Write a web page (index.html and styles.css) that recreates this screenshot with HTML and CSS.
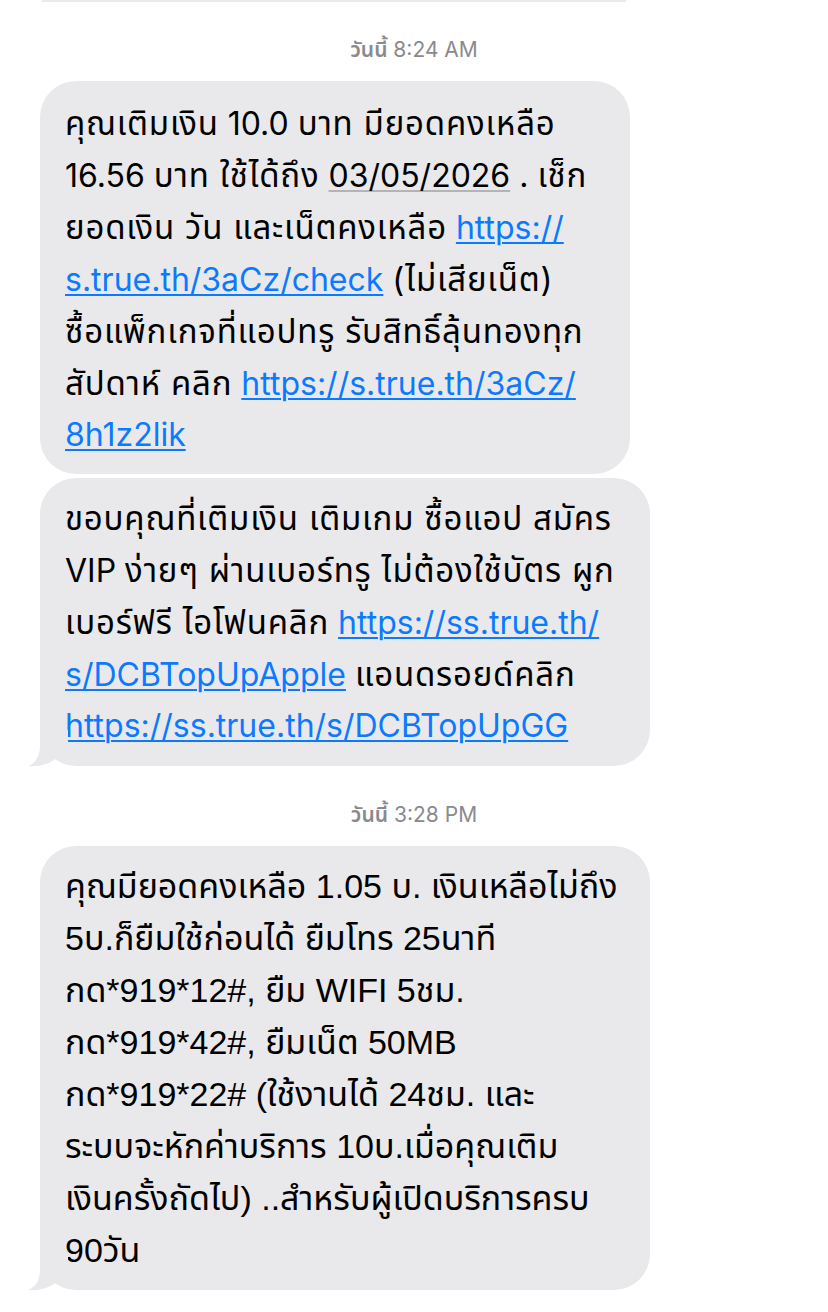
FILE: index.html
```html
<!DOCTYPE html>
<html lang="th">
<head>
<meta charset="utf-8">
<title>Messages</title>
<link rel="stylesheet" href="styles.css">
</head>
<body>
<div class="thread">
  <div class="prev-edge"></div>

  <div class="stamp"><span class="stamp-day">วันนี้</span> 8:24 AM</div>

  <div class="bubble b1">
    <div class="line"><span class="th">คุณเติมเงิน</span> 10.0 <span class="th">บาท มียอดคงเหลือ</span></div>
    <div class="line">16.56 <span class="th">บาท ใช้ได้ถึง</span> <span class="date">03/05/2026</span> . <span class="th">เช็ก</span></div>
    <div class="line"><span class="th">ยอดเงิน วัน และเน็ตคงเหลือ</span> <a class="link">https://</a></div>
    <div class="line"><a class="link">s.true.th/3aCz/check</a> <span class="th">(ไม่เสียเน็ต)</span></div>
    <div class="line"><span class="th">ซื้อแพ็กเกจที่แอปทรู รับสิทธิ์ลุ้นทองทุก</span></div>
    <div class="line"><span class="th">สัปดาห์ คลิก</span> <a class="link">https://s.true.th/3aCz/</a></div>
    <div class="line"><a class="link">8h1z2lik</a></div>
  </div>

  <div class="bubble b2">
    <div class="line"><span class="th">ขอบคุณที่เติมเงิน เติมเกม ซื้อแอป สมัคร</span></div>
    <div class="line">VIP <span class="th">ง่ายๆ ผ่านเบอร์ทรู ไม่ต้องใช้บัตร ผูก</span></div>
    <div class="line"><span class="th">เบอร์ฟรี ไอโฟนคลิก</span> <a class="link">https://ss.true.th/</a></div>
    <div class="line"><a class="link">s/DCBTopUpApple</a> <span class="th">แอนดรอยด์คลิก</span></div>
    <div class="line"><a class="link">https://ss.true.th/s/DCBTopUpGG</a></div>
    <svg class="tail" viewBox="0 0 40 36" aria-hidden="true"><path d="M12 0 L12 15 C12 26 8 33 0 36 C8 37 18 35 24 31 L40 20 L40 0 Z"/></svg>
  </div>

  <div class="stamp stamp2"><span class="stamp-day">วันนี้</span> 3:28 PM</div>

  <div class="bubble b3">
    <div class="line">คุณมียอดคงเหลือ 1.05 บ. เงินเหลือไม่ถึง</div>
    <div class="line">5บ.ก็ยืมใช้ก่อนได้ ยืมโทร 25นาที</div>
    <div class="line">กด*919*12#, ยืม WIFI 5ชม.</div>
    <div class="line">กด*919*42#, ยืมเน็ต 50MB</div>
    <div class="line">กด*919*22# (ใช้งานได้ 24ชม. และ</div>
    <div class="line">ระบบจะหักค่าบริการ 10บ.เมื่อคุณเติม</div>
    <div class="line">เงินครั้งถัดไป) ..สำหรับผู้เปิดบริการครบ</div>
    <div class="line">90วัน</div>
    <svg class="tail" viewBox="0 0 40 36" aria-hidden="true"><path d="M12 0 L12 15 C12 26 8 33 0 36 C8 37 18 35 24 31 L40 20 L40 0 Z"/></svg>
  </div>
</div>
</body>
</html>
```

FILE: styles.css
```css
html, body {
  margin: 0;
  padding: 0;
  background: #ffffff;
}

body {
  font-family: "Inter", "Noto Sans Thai", "Noto Sans Thai UI", "Noto Sans", sans-serif;
  color: #000000;
}

.thread {
  width: 828px;
  display: flex;
  flex-direction: column;
  align-items: flex-start;
}

.prev-edge {
  height: 2px;
  width: 584px;
  margin-left: 42px;
  background: #ebebed;
}

.stamp {
  align-self: stretch;
  height: 24px;
  text-align: center;
  font-size: 21px;
  line-height: 24px;
  color: #8a8a8e;
  margin-top: 36px;
  margin-bottom: 19px;
}

.stamp-day {
  font-weight: 600;
}

.stamp2 {
  margin-top: 37px;
}

.bubble {
  position: relative;
  box-sizing: border-box;
  margin-left: 40px;
  background: #e9e9eb;
  border-radius: 36px;
  padding: 14px 25px;
  font-size: 32px;
}

.line {
  height: 52px;
  line-height: 52px;
  white-space: nowrap;
}

.th {
  font-size: 33px;
  letter-spacing: 0.8px;
}

.b1 {
  width: 590px;
  padding-top: 16px;
  padding-bottom: 13px;
}

.b2 {
  width: 610px;
  margin-top: 4px;
}

.b3 {
  width: 610px;
  font-family: "Liberation Sans", "Noto Sans Thai", sans-serif;
  font-size: 34px;
}

.link {
  color: #0b7aff;
  text-decoration: underline;
  text-decoration-thickness: 2px;
  text-underline-offset: 3px;
}

.date {
  text-decoration: underline;
  text-decoration-color: #b4b4b8;
  text-decoration-thickness: 2px;
  text-underline-offset: 3px;
}

.tail {
  position: absolute;
  left: -12px;
  bottom: 0;
  width: 40px;
  height: 36px;
  fill: #e9e9eb;
}
```
